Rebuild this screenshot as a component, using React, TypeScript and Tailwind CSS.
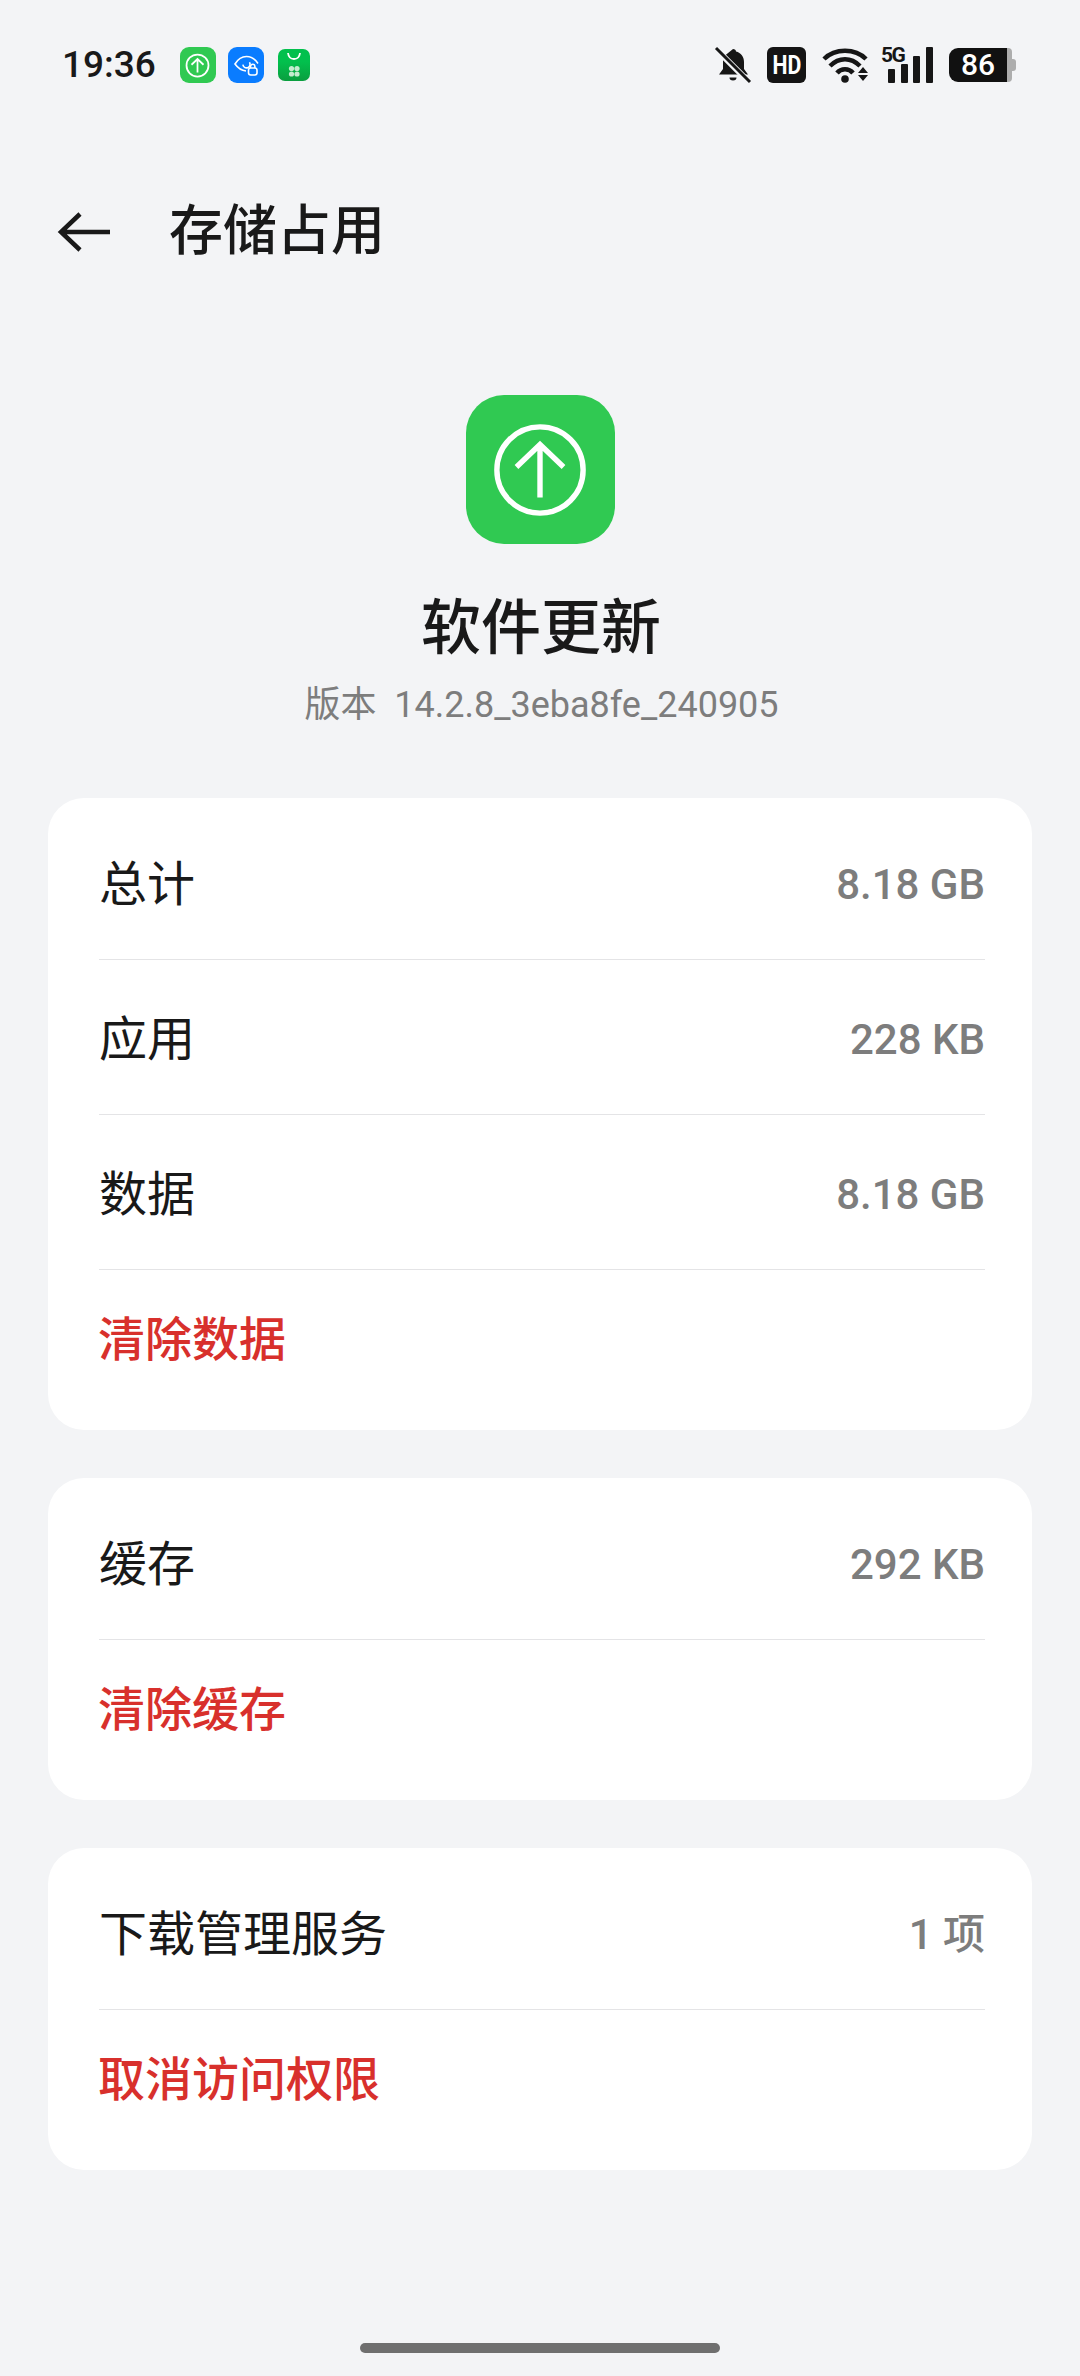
const font = { fontFamily: '"Roboto", "Noto Sans CJK SC", sans-serif' };

function UpdateGlyph({ size, weight }: { size: number; weight: number }) {
  return (
    <svg width={size} height={size} viewBox="-50 -50 100 100" fill="none" stroke="#fff" strokeWidth={weight}>
      <circle r="44" />
      <path d="M0 28V-26M-24 -3 0 -26 24 -3" />
    </svg>
  );
}

function EyeLockIcon() {
  return (
    <svg width="36" height="36" viewBox="0 0 36 36" fill="none" stroke="#fff" strokeWidth="1.600">
      <rect width="36" height="36" rx="9" fill="#0a7cff" stroke="none" />
      <path d="M30 16.500C27 12 23 9.500 18.500 9.500 14 9.500 10 12 7 17c2.500 3.500 6 6.500 11 7" />
      <path d="M14.500 16.500a3.600 3.600 0 1 0 7 0" transform="rotate(-20 18 16)" />
      <rect x="20.500" y="21" width="8.500" height="7" rx="2.200" />
      <path d="M22.500 21v-1.500a2.200 2.200 0 0 1 4.400 0V21" />
    </svg>
  );
}

function StoreIcon() {
  return (
    <svg width="32" height="32" viewBox="0 0 32 32">
      <defs>
        <linearGradient id="store" x1="0" y1="0" x2="0" y2="1">
          <stop offset="0.4" stopColor="#02c04d" />
          <stop offset="1" stopColor="#0a9e3f" />
        </linearGradient>
      </defs>
      <rect width="32" height="32" rx="7" fill="url(#store)" />
      <path d="M10 4c1 8 11 8 12 0" fill="none" stroke="#fff" strokeWidth="1.800" />
      <g fill="#c4ecd0">
        <circle cx="13.500" cy="19.500" r="2.600" />
        <circle cx="19" cy="19.500" r="2.600" />
        <circle cx="13.500" cy="25" r="2.600" />
        <circle cx="19" cy="25" r="2.600" />
      </g>
    </svg>
  );
}

function StatusRight() {
  return (
    <div className="flex items-center">
      <svg width="38" height="38" viewBox="0 0 38 38" className="mr-[15px]">
        <path d="M19 3c1.800 0 3 1.200 3 2.600 5 1.300 8 5.300 8 10.400v7l4 5.500H5l4-5.500v-7c0-2.500.7-4.700 2-6.500z" fill="#161616" />
        <path d="M15.500 31.500h7a3.500 3 0 0 1-7 0z" fill="#161616" />
        <path d="M0 1l36 36" stroke="#f3f4f6" strokeWidth="6" />
        <path d="M2 2l34 34" stroke="#161616" strokeWidth="3" />
      </svg>
      <div className="mr-[16px] flex h-[36px] w-[39px] items-center justify-center rounded-[6px] bg-[#141414] text-white" style={font}>
        <span className="scale-x-[0.85] text-[25px] font-bold leading-none">HD</span>
      </div>
      <svg width="47" height="38" viewBox="0 0 47 38" className="mr-[12px]">
        <g fill="none" stroke="#161616" strokeWidth="4.500">
          <path d="M2 13C13 2 33 2 44 13" />
          <path d="M8 20C17 11 29 11 38 20" />
          <path d="M15 27C19 22 27 22 31 27" />
        </g>
        <circle cx="23" cy="33" r="3.800" fill="#161616" />
        <path d="M41 21l5 6H36zM36 29h10l-5 6z" fill="#161616" />
      </svg>
      <div className="relative mr-[17px] h-[36px] w-[51px]">
        <span className="absolute left-0 top-[-3px] text-[21px] font-bold leading-[22px] tracking-[-1.500px] text-[#161616]" style={font}>5G</span>
        <div className="absolute bottom-0 left-[7px] flex items-end gap-[5.500px]">
          <div className="h-[14px] w-[7px] rounded-[1px] bg-[#161616]" />
          <div className="h-[19px] w-[7px] rounded-[1px] bg-[#161616]" />
          <div className="h-[27px] w-[7px] rounded-[1px] bg-[#161616]" />
          <div className="h-[36px] w-[7px] rounded-[1px] bg-[#161616]" />
        </div>
      </div>
      <div className="flex items-center">
        <div className="flex h-[34px] w-[58px] items-center justify-center rounded-l-[9px] bg-[#111111] text-[30px] font-medium leading-none text-white" style={font}>
          86
        </div>
        <div className="h-[34px] w-[5px] rounded-r-[4px] bg-[#adadad]" />
        <div className="h-[12px] w-[4px] rounded-r-[3px] bg-[#adadad]" />
      </div>
    </div>
  );
}

function Row({ label, value }: { label: string; value: string }) {
  return (
    <div className="flex h-[155px] items-center justify-between border-b border-[#e4e4e6] pt-[6px]">
      <span className="text-[48px] leading-none text-[#191919]">{label}</span>
      <span className="text-[42px] font-medium leading-none text-[#7d7d7d]">{value}</span>
    </div>
  );
}

function Action({ label }: { label: string }) {
  return (
    <div className="flex h-[160px] items-center pb-[21px]">
      <span className="-ml-[1px] text-[47px] font-medium leading-none text-[#d8302c]">{label}</span>
    </div>
  );
}

function Card({ children }: { children: React.ReactNode }) {
  return <section className="rounded-[36px] bg-white pl-[51px] pr-[47px] pt-[7px]">{children}</section>;
}

export default function App() {
  return (
    <main className="flex h-[2376px] w-[1080px] flex-col overflow-hidden bg-[#f3f4f6]" style={font}>
      <header className="flex h-[130px] items-center justify-between pl-[62px] pr-[64px]">
        <div className="flex items-center">
          <span className="mr-[24px] text-[37px] font-medium leading-[48px] text-[#191919]">19:36</span>
          <div className="mr-[12px] flex h-[36px] w-[36px] items-center justify-center rounded-[9px] bg-[#30c952]">
            <UpdateGlyph size={25} weight={7} />
          </div>
          <div className="mr-[14px]"><EyeLockIcon /></div>
          <StoreIcon />
        </div>
        <StatusRight />
      </header>

      <div className="mt-[64px] flex h-[76px] items-center pl-[56px]">
        <svg width="56" height="44" viewBox="0 0 56 44" fill="none" stroke="#191919" strokeWidth="4.500" className="mr-[57px]">
          <path d="M54 22H5M24 4 5 22l19 18" />
        </svg>
        <h1 className="text-[54px] font-medium leading-none text-[#191919]">存储占用</h1>
      </div>

      <div className="mt-[125px] flex flex-col items-center">
        <div className="flex h-[149px] w-[149px] items-center justify-center rounded-[38px] bg-[#30c952]">
          <UpdateGlyph size={98} weight={5.500} />
        </div>
        <h2 className="mt-[52px] pl-[2px] text-[60px] font-medium leading-[66px] text-[#191919]">软件更新</h2>
        <p className="mt-[20px] whitespace-pre pl-[3px] text-[36px] leading-[46px] text-[#7d7d7d]">版本  14.2.8_3eba8fe_240905</p>
      </div>

      <div className="mt-[70px] flex flex-col gap-[48px] px-[48px]">
        <Card>
          <Row label="总计" value="8.18 GB" />
          <Row label="应用" value="228 KB" />
          <Row label="数据" value="8.18 GB" />
          <Action label="清除数据" />
        </Card>
        <Card>
          <Row label="缓存" value="292 KB" />
          <Action label="清除缓存" />
        </Card>
        <Card>
          <Row label="下载管理服务" value="1 项" />
          <Action label="取消访问权限" />
        </Card>
      </div>

      <div className="mt-auto mb-[23px] h-[10px] w-[360px] self-center rounded-full bg-[#6f6f6f]" />
    </main>
  );
}
